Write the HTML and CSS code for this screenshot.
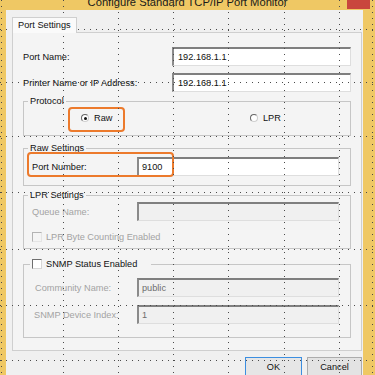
FILE: index.html
```html
<!DOCTYPE html>
<html lang="en">
  <head>
    <meta charset="UTF-8" />
    <title>Configure Standard TCP/IP Port Monitor</title>
    <link rel="stylesheet" href="styles.css">
  </head>
  <body>
    <div class="window">
      <!-- Title bar -->
      <div class="titlebar">
        <span class="title">Configure Standard TCP/IP Port Monitor</span>
        <span class="close"></span>
      </div>

      <div class="client">
        <div class="tabs">
          <span class="tab">Port Settings</span>
        </div>

        <div class="panel">
          <div class="row first">
            <label class="label wide">Port Name:</label>
            <div class="field wide-field">192.168.1.1</div>
          </div>
          <div class="row second">
            <label class="label wide">Printer Name or IP Address:</label>
            <div class="field wide-field">192.168.1.1</div>
          </div>

          <!-- Protocol -->
          <div class="group protocol">
            <span class="group-title">Protocol</span>
            <div class="radios">
              <span class="option"><span class="radio checked"></span>Raw</span>
              <span class="option"><span class="radio"></span>LPR</span>
            </div>
            <span class="mark mark-raw"></span>
          </div>

          <!-- Raw Settings -->
          <div class="group raw">
            <span class="group-title">Raw Settings</span>
            <div class="row group-row">
              <label class="label">Port Number:</label>
              <div class="field">9100</div>
            </div>
            <span class="mark mark-port"></span>
          </div>

          <!-- LPR Settings -->
          <div class="group lpr">
            <span class="group-title">LPR Settings</span>
            <div class="row group-row queue">
              <label class="label disabled">Queue Name:</label>
              <div class="field off"></div>
            </div>
            <div class="check-row disabled">
              <span class="checkbox off"></span>LPR Byte Counting Enabled
            </div>
          </div>

          <!-- SNMP -->
          <div class="group snmp">
            <span class="group-title check-title"><span class="checkbox"></span>SNMP Status Enabled</span>
            <div class="row group-row community">
              <label class="label disabled indent">Community Name:</label>
              <div class="field off">public</div>
            </div>
            <div class="row group-row device">
              <label class="label disabled indent-sm">SNMP Device Index:</label>
              <div class="field off">1</div>
            </div>
          </div>
        </div>

        <div class="buttons">
          <button class="btn default">OK</button>
          <button class="btn cancel">Cancel</button>
        </div>
      </div>

      <!-- designer grid -->
      <svg class="grid" width="375" height="375" viewBox="0 0 375 375">
        <g stroke="#4a4a4a" stroke-width="1" stroke-dasharray="1 5">
          <line x1="1.5" y1="0" x2="1.5" y2="375" />
          <line x1="63.5" y1="0" x2="63.5" y2="375" />
          <line x1="118.5" y1="0" x2="118.5" y2="375" />
          <line x1="173.5" y1="0" x2="173.5" y2="375" />
          <line x1="228.5" y1="0" x2="228.5" y2="375" />
          <line x1="284.5" y1="0" x2="284.5" y2="375" />
          <line x1="339.5" y1="0" x2="339.5" y2="375" />
          <line x1="372.5" y1="0" x2="372.5" y2="375" />
          <line x1="0" y1="29.5" x2="375" y2="29.5" />
          <line x1="0" y1="82.5" x2="375" y2="82.5" />
          <line x1="0" y1="136.5" x2="375" y2="136.5" />
          <line x1="0" y1="192.5" x2="375" y2="192.5" />
          <line x1="0" y1="249.5" x2="375" y2="249.5" />
          <line x1="0" y1="305.5" x2="375" y2="305.5" />
          <line x1="0" y1="360.5" x2="375" y2="360.5" />
        </g>
      </svg>
    </div>
  </body>
</html>
```

FILE: styles.css
```css
* {
  box-sizing: border-box;
}

body {
  margin: 0;
  width: 375px;
  height: 375px;
  overflow: hidden;
  background: #efc864;
  font-family: "Liberation Sans", Arial, sans-serif;
  font-size: 9.2px;
  color: #111;
}

.window {
  position: relative;
  width: 375px;
  height: 375px;
  background: #efc864;
}

.titlebar {
  height: 10px;
  display: flex;
  padding-left: 28px;
}

.title {
  flex: 1;
  text-align: center;
  font-size: 11.2px;
  line-height: 12px;
  margin-top: -4px;
  color: #1a1a1a;
  white-space: nowrap;
}

.close {
  width: 23px;
  height: 9px;
  margin-right: 5px;
  background: #c9463d;
}

.client {
  width: 357px;
  margin-left: 6px;
  height: 365px;
  padding: 7px 1px 0 6px;
  background: #f0f0f0;
}

.tabs {
  display: flex;
}

.tab {
  position: relative;
  z-index: 1;
  height: 16px;
  margin-bottom: -1px;
  padding: 0 5px;
  line-height: 15px;
  background: #fafafa;
  border: 1px solid #cfcfcf;
  border-bottom: none;
}

.panel {
  width: 350px;
  padding: 0 10px 12px 10px;
  background: #f4f4f4;
  border: 1px solid #cfcfcf;
}

.row {
  display: flex;
  align-items: center;
}

.row.first {
  margin-top: 14px;
}

.row.second {
  margin-top: 7px;
}

.label {
  width: 105px;
  white-space: nowrap;
}

.label.wide {
  width: 149px;
}

.label.disabled,
.check-row.disabled {
  color: #a3a3a3;
}

.label.indent {
  padding-left: 3px;
}

.label.indent-sm {
  padding-left: 2px;
}

.field {
  width: 202px;
  height: 19px;
  padding-left: 3px;
  line-height: 16px;
  background: #fff;
  border-top: 2px solid #7f7f7f;
  border-left: 2px solid #8a8a8a;
  border-right: 1px solid #dedede;
  border-bottom: 1px solid #dedede;
}

.field.wide-field {
  width: 179px;
  padding-left: 4px;
}

.field.off {
  background: #f0f0f0;
  color: #6d6d6d;
}

.group {
  position: relative;
  width: 328px;
  border: 1px solid #c6c6c6;
}

.group-title {
  display: block;
  width: fit-content;
  height: 12px;
  margin: -7px 0 0 4px;
  padding: 0 2px;
  line-height: 12px;
  background: #f4f4f4;
  color: #111;
}

.protocol {
  height: 35px;
  margin-top: 9px;
}

.radios {
  display: grid;
  grid-template-columns: 169px auto;
  height: 12px;
  margin-top: 5px;
  padding-left: 57px;
  line-height: 12px;
}

.option {
  display: flex;
  align-items: center;
  gap: 5px;
}

.radio {
  width: 8px;
  height: 8px;
  border-radius: 50%;
  background: #fff;
  border: 1px solid;
  border-color: #666 #cfcfcf #cfcfcf #666;
  display: flex;
  align-items: center;
  justify-content: center;
}

.radio.checked::after {
  content: "";
  width: 3px;
  height: 3px;
  border-radius: 50%;
  background: #111;
}

.mark {
  position: absolute;
  border: 2px solid #ec7a2c;
  border-radius: 4px;
}

.mark-raw {
  left: 44px;
  top: 5px;
  width: 57px;
  height: 25px;
}

.mark-port {
  left: 3px;
  top: 3px;
  width: 147px;
  height: 25px;
}

.raw {
  height: 38px;
  margin-top: 12px;
}

.group-row {
  padding-left: 8px;
}

.raw .group-row {
  margin-top: 3px;
}

.lpr {
  height: 54px;
  margin-top: 9px;
}

.queue {
  margin-top: 1px;
}

.check-row {
  display: flex;
  align-items: center;
  gap: 4px;
  height: 12px;
  margin-top: 10px;
  padding-left: 8px;
}

.checkbox {
  width: 10px;
  height: 10px;
  background: #fff;
  border: 1px solid;
  border-color: #6e6e6e #d6d6d6 #d6d6d6 #6e6e6e;
}

.checkbox.off {
  background: #f4f4f4;
  border-color: #b3b3b3 #e4e4e4 #e4e4e4 #b3b3b3;
}

.snmp {
  height: 74px;
  margin-top: 15px;
}

.check-title {
  display: flex;
  align-items: center;
  gap: 4px;
  margin-left: 6px;
  padding: 0 14px 0 2px;
}

.community {
  margin-top: 8px;
}

.device {
  margin-top: 8px;
}

.buttons {
  display: flex;
  justify-content: flex-end;
  gap: 5px;
  margin-top: 6px;
}

.btn {
  height: 19px;
  padding: 0;
  font-family: inherit;
  font-size: 9.2px;
  color: #111;
  background: #e3e3e3;
  border: 1px solid #acacac;
}

.btn.default {
  width: 57px;
  border-color: #3c8ee0;
  background: #e6e6e6;
}

.btn.cancel {
  width: 55px;
}

.grid {
  position: absolute;
  top: 0;
  left: 0;
  pointer-events: none;
}
```
